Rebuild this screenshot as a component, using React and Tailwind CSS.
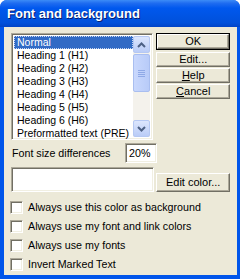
import React from "react";

const sunken =
  "border border-t-[#ACA899] border-l-[#ACA899] border-r-white border-b-white shadow-[inset_1px_1px_0_#716F64,inset_-1px_-1px_0_#F1EFE2]";
const raised =
  "border border-t-white border-l-white border-r-[#716F64] border-b-[#716F64] shadow-[inset_-1px_-1px_0_#ACA899] bg-[#ECE9D8] flex items-center justify-center text-[11px] text-black";

function Btn({ children, cls = "" }) {
  return <div className={`${raised} ${cls}`}>{children}</div>;
}

function Check({ label }) {
  return (
    <div className="flex items-center h-[19px]">
      <div className={`w-[13px] h-[13px] bg-white ${sunken}`} />
      <span className="ml-[5px] text-[10.7px] text-black">{label}</span>
    </div>
  );
}

function Arrow({ up }) {
  return (
    <svg width="9" height="6" viewBox="0 0 9 6">
      <path
        d={up ? "M1 5 L4.5 1.5 L8 5" : "M1 1 L4.5 4.5 L8 1"}
        fill="none"
        stroke="#4D6185"
        strokeWidth="2"
      />
    </svg>
  );
}

export default function App() {
  const items = [
    "Heading 1 (H1)",
    "Heading 2 (H2)",
    "Heading 3 (H3)",
    "Heading 4 (H4)",
    "Heading 5 (H5)",
    "Heading 6 (H6)",
    "Preformatted text (PRE)",
  ];
  return (
    <div className="w-[240px] h-[279px] bg-white font-['Liberation_Sans',Arial,sans-serif]">
      <div className="w-[240px] h-[279px] flex flex-col rounded-t-[7px] bg-[#0055EA] overflow-hidden">
        <div className="h-[27px] shrink-0 flex items-center pl-[7px] bg-[linear-gradient(to_bottom,#3C8CF7_0%,#1F6CF0_12%,#0058EE_30%,#0054E3_60%,#0050DB_85%,#0043C6_100%)]">
          <span className="text-white font-bold text-[13px] [text-shadow:1px_1px_0_#0A1E6E]">
            Font and background
          </span>
        </div>
        <div className="flex-1 mx-[4px] mr-[3px] mb-[4px] bg-[#ECE9D8] flex flex-col px-[7px] pt-[6px]">
          <div className="flex">
            <div className={`w-[145px] h-[107px] bg-white flex p-[2px] ${sunken}`}>
              <div className="flex-1 flex flex-col">
                <div className="h-[13px] bg-[#316AC5] text-white text-[10.5px] leading-[13px] pl-[3px] outline-1 outline-dotted outline-[#C9D7F0] -outline-offset-1">
                  Normal
                </div>
                {items.map((t) => (
                  <div key={t} className="h-[13px] text-black text-[10.5px] leading-[13px] pl-[3px] whitespace-nowrap">
                    {t}
                  </div>
                ))}
              </div>
              <div className="w-[17px] flex flex-col bg-[#F4F2EC]">
                <div className="h-[17px] rounded-[2px] border border-[#B5C8F3] bg-[linear-gradient(to_bottom,#DCE6FD,#BACCF7)] flex items-center justify-center">
                  <Arrow up />
                </div>
                <div className="mt-[1px] h-[38px] rounded-[2px] border border-[#A9BEF0] bg-[linear-gradient(to_right,#C9D8FD,#B8CBF8)] flex flex-col items-center justify-center gap-[1px]">
                  <div className="w-[7px] h-[1px] bg-[#8FA9E6]" />
                  <div className="w-[7px] h-[1px] bg-[#8FA9E6]" />
                  <div className="w-[7px] h-[1px] bg-[#8FA9E6]" />
                  <div className="w-[7px] h-[1px] bg-[#8FA9E6]" />
                </div>
                <div className="flex-1" />
                <div className="h-[17px] rounded-[2px] border border-[#B5C8F3] bg-[linear-gradient(to_bottom,#DCE6FD,#BACCF7)] flex items-center justify-center">
                  <Arrow />
                </div>
              </div>
            </div>
            <div className="ml-[3px] w-[75px] flex flex-col">
              <div className="h-[17px] border border-black flex">
                <Btn cls="flex-1">OK</Btn>
              </div>
              <Btn cls="h-[15px] mt-[2px]">Edit...</Btn>
              <Btn cls="h-[15px] mt-[1px]">
                <span><span className="underline">H</span>elp</span>
              </Btn>
              <Btn cls="h-[15px] mt-[1px]">
                <span><span className="underline">C</span>ancel</span>
              </Btn>
            </div>
          </div>
          <div className="flex items-center mt-[3px] h-[20px]">
            <span className="text-[10.7px] text-black w-[114px] pl-[1px]">Font size differences</span>
            <div className={`w-[32px] h-[20px] bg-white ${sunken} flex items-center pl-[3px] text-[10.7px] text-black`}>
              20%
            </div>
          </div>
          <div className="flex items-end mt-[4px]">
            <div className={`w-[146px] h-[25px] bg-white ${sunken}`} />
            <Btn cls="ml-[2px] w-[75px] h-[19px]">Edit color...</Btn>
          </div>
          <div className="mt-[6px] flex flex-col -ml-[1px]">
            <Check label="Always use this color as background" />
            <Check label="Always use my font and link colors" />
            <Check label="Always use my fonts" />
            <Check label="Invert Marked Text" />
          </div>
        </div>
      </div>
    </div>
  );
}
